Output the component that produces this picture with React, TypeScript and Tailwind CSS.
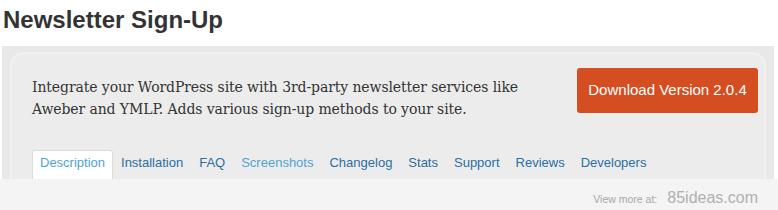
import React from "react";

const tabs = [
  { label: "Description", active: true, light: true },
  { label: "Installation" },
  { label: "FAQ" },
  { label: "Screenshots", light: true },
  { label: "Changelog" },
  { label: "Stats" },
  { label: "Support" },
  { label: "Reviews" },
  { label: "Developers" },
];

export default function App() {
  return (
    <div className="w-[778px] h-[210px] bg-white overflow-hidden" style={{ fontFamily: '"Liberation Sans", Arial, sans-serif' }}>
      <div className="h-[46px] pt-[8px] pl-[3px]">
        <h1 className="text-[24px] leading-[24px] font-bold text-[#333333]" style={{ fontFamily: '"Liberation Sans", Arial, sans-serif' }}>
          Newsletter Sign-Up
        </h1>
      </div>
      <div className="ml-[2px] w-[772px] h-[133px] bg-[#e8e8e8] pt-[6px] px-[8px]">
        <div className="h-[127px] bg-[#ececec] border-2 border-b-0 border-[#f1f1f1] rounded-t-[14px] pt-[14px] pl-[20px] pr-[6px]">
          <div className="flex justify-between items-start h-[52px]">
            <p className="mt-[8px] w-[520px] text-[14px] leading-[22px] tracking-[-0.1px] text-[#333333] whitespace-nowrap" style={{ fontFamily: '"DejaVu Serif", Georgia, serif' }}>
              Integrate your WordPress site with 3rd-party newsletter services like
              <br />
              Aweber and YMLP. Adds various sign-up methods to your site.
            </p>
            <div className="w-[181px] h-[45px] bg-[#d54e21] rounded-[3px] flex items-center justify-center text-white text-[15px]">
              Download Version 2.0.4
            </div>
          </div>
          <div className="flex mt-[30px]">
            {tabs.map((t) => (
              <div
                key={t.label}
                className={
                  "h-[29px] px-[7px] border border-b-0 rounded-t-[3px] text-[13px] leading-[24px] " +
                  (t.active ? "bg-white border-[#dcdcdc] " : "border-transparent ") +
                  (t.light ? "text-[#4fa3d3]" : "text-[#2a6ea4]")
                }
              >
                {t.label}
              </div>
            ))}
          </div>
        </div>
      </div>
      <div className="h-[31px] bg-[#f4f4f4] flex items-baseline justify-end pr-[20px] pt-[11px]">
        <span className="text-[10.5px] leading-[16px] text-[#a8a8a8] mr-[10px]">View more at:</span>
        <span className="text-[16px] leading-[16px] text-[#b0b0b0]">85ideas.com</span>
      </div>
    </div>
  );
}
